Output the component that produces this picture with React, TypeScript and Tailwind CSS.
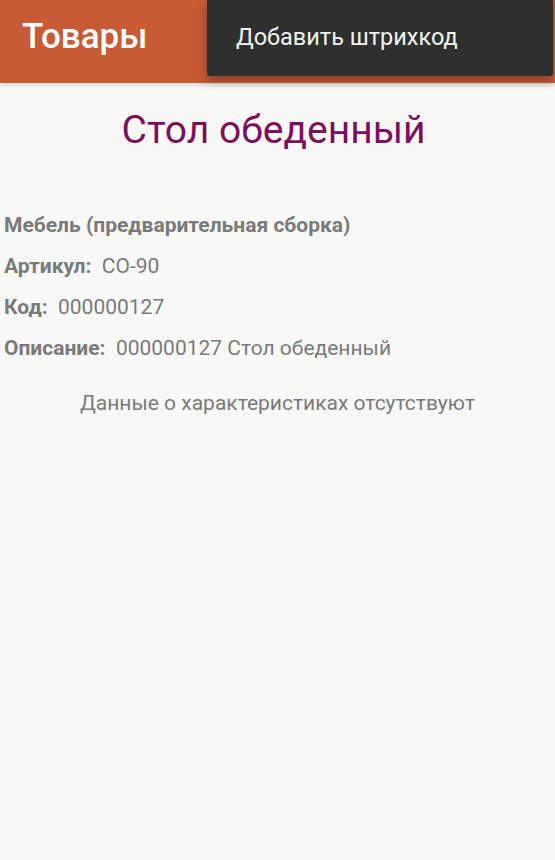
export default function App() {
  return (
    <div className="relative min-h-[860px] w-full bg-[#f8f9f7] font-['Roboto',sans-serif]">
      <header className="flex h-[83px] items-center bg-[#c65b36] px-[22px] shadow-[0_2px_4px_rgba(0,0,0,0.15)]">
        <h1 className="-mt-[10px] text-[35px] font-medium leading-none text-white">Товары</h1>
      </header>
      <div className="absolute left-[207px] right-[2px] top-0 flex h-[76px] items-center rounded-b-[3px] bg-[#2e302d] px-[29px] shadow-[0_4px_12px_rgba(0,0,0,0.35)]">
        <span className="text-[23.5px] leading-none text-[#f2f2f2]">Добавить штрихкод</span>
      </div>
      <main className="flex flex-col text-[21px] text-[#7a7a7a]">
        <h2 className="mt-[24px] pr-[8px] text-center text-[39px] leading-[46px] text-[#7b0f5e]">Стол обеденный</h2>
        <div className="mt-[60px] flex flex-col gap-[16px] px-[4px] leading-[25px]">
          <div className="font-bold">Мебель (предварительная сборка)</div>
          <div>
            <span className="font-bold">Артикул:</span>&nbsp; CO-90
          </div>
          <div>
            <span className="font-bold">Код:</span>&nbsp; 000000127
          </div>
          <div>
            <span className="font-bold">Описание:</span>&nbsp; 000000127 Стол обеденный
          </div>
        </div>
        <p className="mt-[30px] text-center leading-[25px]">Данные о характеристиках отсутствуют</p>
      </main>
    </div>
  );
}
